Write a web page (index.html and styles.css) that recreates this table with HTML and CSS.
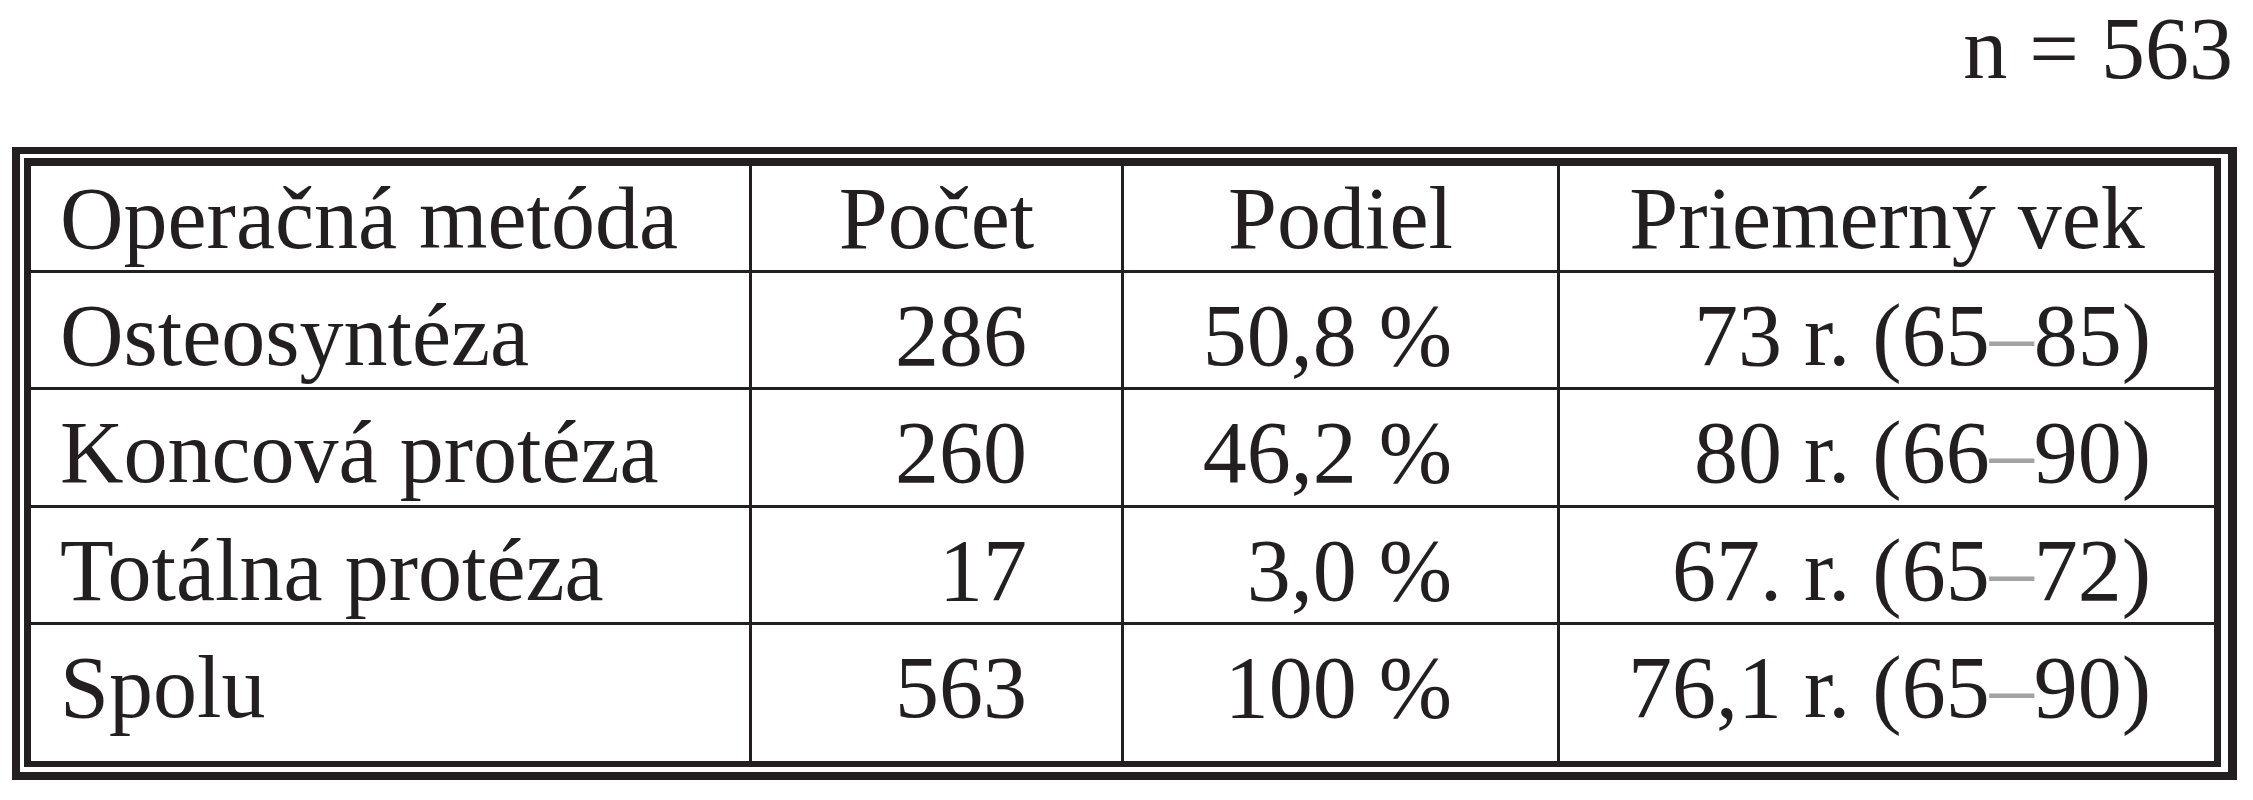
FILE: index.html
```html
<!DOCTYPE html>
<html lang="sk">
<head>
<meta charset="utf-8">
<title>Operačná metóda</title>
<link rel="stylesheet" href="styles.css">
</head>
<body>
<div class="page">
  <p class="count">n = 563</p>
  <div class="frame">
    <div class="grid">
      <div class="cell head name">Operačná metóda</div>
      <div class="cell head">Počet</div>
      <div class="cell head">Podiel</div>
      <div class="cell head">Priemerný vek</div>

      <div class="cell name">Osteosyntéza</div>
      <div class="cell num c2">286</div>
      <div class="cell num c3">50,8 %</div>
      <div class="cell num c4">73 r. (65<span class="dash">–</span>85)</div>

      <div class="cell name">Koncová protéza</div>
      <div class="cell num c2">260</div>
      <div class="cell num c3">46,2 %</div>
      <div class="cell num c4">80 r. (66<span class="dash">–</span>90)</div>

      <div class="cell name">Totálna protéza</div>
      <div class="cell num c2">17</div>
      <div class="cell num c3">3,0 %</div>
      <div class="cell num c4">67. r. (65<span class="dash">–</span>72)</div>

      <div class="cell name">Spolu</div>
      <div class="cell num c2">563</div>
      <div class="cell num c3">100 %</div>
      <div class="cell num c4">76,1 r. (65<span class="dash">–</span>90)</div>
    </div>
  </div>
</div>
</body>
</html>
```

FILE: styles.css
```css
html, body {
  margin: 0;
  padding: 0;
  background: #ffffff;
}

body {
  color: #231f20;
  font-family: "Liberation Serif", "Times New Roman", serif;
}

.page {
  padding: 0 16px 0 12px;
}

.count {
  margin: 0;
  text-align: right;
  font-size: 88px;
  line-height: 98px;
  padding-right: 4px;
}

.frame {
  margin-top: 49px;
  border-style: solid;
  border-color: #231f20;
  border-width: 7px 9px 8px 8px;
  padding: 4px 7px 5px 4px;
}

.grid {
  display: grid;
  grid-template-columns: 718px 369px 433px 654px;
  grid-template-rows: 104px 114px 115px 114px 136px;
  gap: 3px;
  background: #231f20;
  border-style: solid;
  border-color: #231f20;
  border-width: 8px 7px 6px 7px;
}

.cell {
  background: #ffffff;
  font-size: 88px;
  line-height: 88px;
  padding-top: 19px;
  white-space: nowrap;
}

.head {
  padding-top: 9px;
  text-align: center;
}

.name {
  text-align: left;
  padding-left: 29px;
}

.num {
  text-align: right;
}

.c2 {
  padding-right: 94px;
}

.c3 {
  padding-right: 105px;
}

.c4 {
  padding-right: 63px;
}

.dash {
  color: #a3a3a3;
}
```
